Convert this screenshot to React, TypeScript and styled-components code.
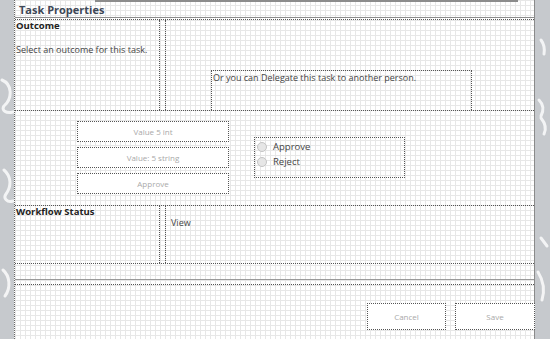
import React from 'react';
import styled, { createGlobalStyle } from 'styled-components';

const GlobalStyle = createGlobalStyle`
  html, body {
    margin: 0;
    padding: 0;
    background: #c6c9cd;
  }
  body {
    font-family: 'Open Sans', 'Liberation Sans', sans-serif;
  }
`;

const Page = styled.div`
  display: flex;
  width: 550px;
  height: 339px;
  overflow: hidden;
`;

const Rail = styled.div<{ $width: number }>`
  width: ${(p) => p.$width}px;
  flex-shrink: 0;
  background: #c6c9cd;
  position: relative;

  svg {
    position: absolute;
    inset: 0;
  }
`;

const Canvas = styled.div`
  flex: 1;
  display: flex;
  flex-direction: column;
  border-left: 1px dotted #666;
  border-right: 1px solid #8a8a8a;
  background-color: #fff;
  background-image:
    linear-gradient(#e7e7e7 1px, transparent 1px),
    linear-gradient(90deg, #e7e7e7 1px, transparent 1px);
  background-size: 5px 5px;
  color: #444;
  font-size: 9px;
`;

const TopRule = styled.div`
  height: 3px;
  display: flex;

  &::after {
    content: '';
    flex: 1;
    margin: 0 16px 0 80px;
    border-top: 2px solid #8c8c8c;
  }
`;

const Header = styled.div`
  height: 14px;
  line-height: 14px;
  padding-left: 4px;
  font-size: 11px;
  font-weight: 700;
  color: #3d4756;
  border-bottom: 1px solid #8c8c8c;
`;

const Section = styled.div<{ $height: number; $gap?: number }>`
  height: ${(p) => p.$height}px;
  margin-top: ${(p) => p.$gap ?? 0}px;
  display: flex;
  border-top: 1px dotted #555;
  border-bottom: 1px dotted #555;
  box-sizing: border-box;
`;

const LabelCell = styled.div`
  width: 144px;
  border-right: 1px dotted #555;
  display: flex;
  flex-direction: column;
`;

const ValueCell = styled.div`
  flex: 1;
  margin-left: 5px;
  border-left: 1px dotted #555;
  display: flex;
  flex-direction: column;
`;

const Title = styled.div`
  font-weight: 700;
  color: #222;
  font-size: 9.5px;
  line-height: 11px;
  padding-left: 1px;
`;

const Text = styled.div<{ $pad: string }>`
  padding: ${(p) => p.$pad};
  line-height: 12px;
  white-space: nowrap;
`;

const DelegateBox = styled.div`
  margin: auto 0 0 45px;
  width: 261px;
  height: 40px;
  box-sizing: border-box;
  border: 1px dotted #555;
  border-bottom: none;
  padding: 1px 0 0 1px;
  line-height: 12px;
  white-space: nowrap;
`;

const Middle = styled.div`
  height: 94px;
  display: flex;
  align-items: flex-start;
  padding: 10px 0 0 62px;
  box-sizing: border-box;
  gap: 25px;
`;

const ButtonStack = styled.div`
  display: flex;
  flex-direction: column;
  gap: 5px;
`;

const GhostButton = styled.div<{ $width: number }>`
  width: ${(p) => p.$width}px;
  height: 21px;
  box-sizing: border-box;
  border: 1px dotted #555;
  background: #fff;
  color: #a9a9a9;
  font-size: 8px;
  display: flex;
  align-items: center;
  justify-content: center;
`;

const RadioBox = styled.div`
  margin-top: 16px;
  width: 151px;
  height: 41px;
  box-sizing: border-box;
  border: 1px dotted #555;
  padding: 2px 0 0 2px;
  display: flex;
  flex-direction: column;
  gap: 2px;
`;

const RadioRow = styled.label`
  display: flex;
  align-items: center;
  gap: 6px;
  height: 13px;
  font-size: 9.5px;
  color: #444;
`;

const RadioDot = styled.span`
  width: 8px;
  height: 8px;
  border-radius: 50%;
  border: 1px solid #c4c4c4;
  background: #e6e6e6;
`;

const Spacer = styled.div`
  height: 15px;
`;

const DoubleRule = styled.div`
  height: 4px;
  border-top: 1px solid #9a9a9a;
  border-bottom: 1px dotted #555;
`;

const Footer = styled.div`
  display: flex;
  justify-content: flex-end;
  gap: 9px;
  padding-top: 18px;
  margin-right: -1px;
`;

const FooterButton = styled(GhostButton)`
  height: 27px;
`;

const Watermark = ({ side }: { side: 'left' | 'right' }) => (
  <svg width="100%" height="339" viewBox={side === 'left' ? '0 0 14 339' : '0 0 15 339'}>
    <g fill="none" stroke="#fff" strokeWidth="3" strokeLinecap="round" opacity="0.8">
      {side === 'left' ? (
        <>
          <path d="M2 80 C12 84 13 98 4 106 C1 110 6 114 13 112" />
          <path d="M4 170 C11 176 12 186 6 194 C3 198 7 203 13 201" />
          <path d="M3 270 C10 276 11 288 5 296" />
        </>
      ) : (
        <>
          <path d="M6 40 C9 44 10 48 9 54" />
          <path d="M4 100 C8 104 9 110 6 116" />
          <path d="M6 118 C10 123 12 128 9 134" />
          <path d="M6 238 L12 246" />
          <path d="M3 272 C8 280 10 290 7 300" />
        </>
      )}
    </g>
  </svg>
);

export default function App() {
  return (
    <>
      <GlobalStyle />
      <Page>
        <Rail $width={14}>
          <Watermark side="left" />
        </Rail>
        <Canvas>
          <TopRule />
          <Header>Task Properties</Header>
          <Section $height={92} $gap={1}>
            <LabelCell>
              <Title>Outcome</Title>
              <Text $pad="13px 0 0 1px">Select an outcome for this task.</Text>
            </LabelCell>
            <ValueCell>
              <DelegateBox>Or you can Delegate this task to another person.</DelegateBox>
            </ValueCell>
          </Section>
          <Middle>
            <ButtonStack>
              <GhostButton $width={152}>Value 5 int</GhostButton>
              <GhostButton $width={152}>Value: 5 string</GhostButton>
              <GhostButton $width={152}>Approve</GhostButton>
            </ButtonStack>
            <RadioBox>
              <RadioRow>
                <RadioDot />
                Approve
              </RadioRow>
              <RadioRow>
                <RadioDot />
                Reject
              </RadioRow>
            </RadioBox>
          </Middle>
          <Section $height={59}>
            <LabelCell>
              <Title>Workflow Status</Title>
            </LabelCell>
            <ValueCell>
              <Text $pad="11px 0 0 5px">View</Text>
            </ValueCell>
          </Section>
          <Spacer />
          <DoubleRule />
          <Footer>
            <FooterButton $width={79}>Cancel</FooterButton>
            <FooterButton $width={80}>Save</FooterButton>
          </Footer>
        </Canvas>
        <Rail $width={15}>
          <Watermark side="right" />
        </Rail>
      </Page>
    </>
  );
}
